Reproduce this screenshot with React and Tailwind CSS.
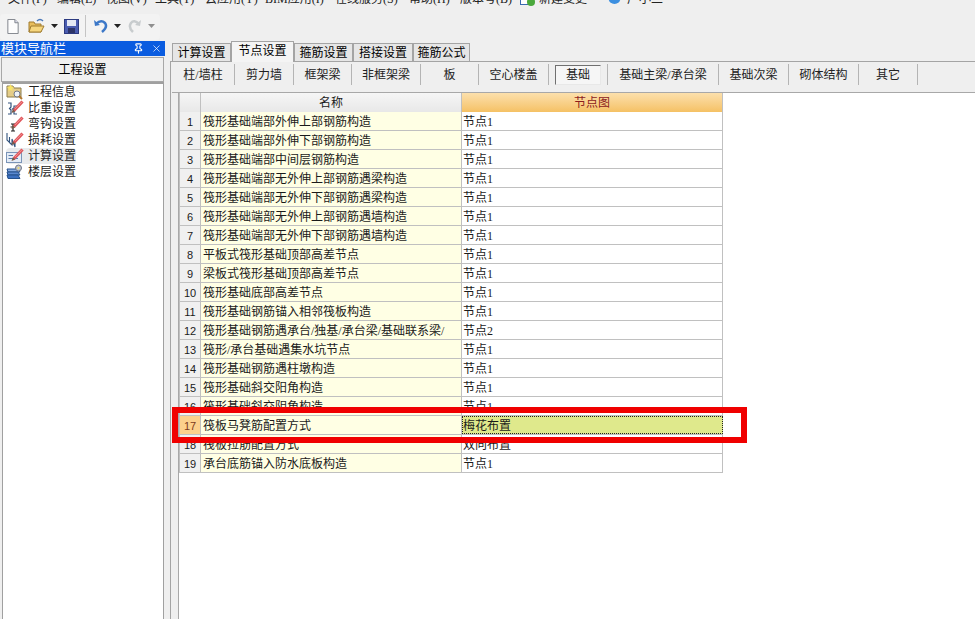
import { Pin, X } from "lucide-react";

const FONT = { fontFamily: '"Liberation Serif", "Noto Sans CJK SC", serif' };

const MENUS = [
  { label: "文件(F)", w: "w-[49px]" },
  { label: "编辑(E)", w: "w-[49px]" },
  { label: "视图(V)", w: "w-[49px]" },
  { label: "工具(T)", w: "w-[50px]" },
  { label: "云应用(Y)", w: "w-[60px]" },
  { label: "BIM应用(I)", w: "w-[70px]" },
  { label: "在线服务(S)", w: "w-[74px]" },
  { label: "帮助(H)", w: "w-[51px]" },
  { label: "版本号(B)", w: "w-[60px]" },
];

const TABS = [
  { label: "计算设置", w: "w-[59px]" },
  { label: "节点设置", w: "w-[63px]", active: true },
  { label: "箍筋设置", w: "w-[59px]" },
  { label: "搭接设置", w: "w-[60px]" },
  { label: "箍筋公式", w: "w-[57px]" },
];

const SUB_TABS = [
  { label: "柱/墙柱", w: "w-[63px]" },
  { label: "剪力墙", w: "w-[59px]" },
  { label: "框架梁", w: "w-[58px]" },
  { label: "非框架梁", w: "w-[69px]" },
  { label: "板", w: "w-[58px]" },
  { label: "空心楼盖", w: "w-[70px]" },
  { label: "基础", w: "w-[59px]", active: true },
  { label: "基础主梁/承台梁", w: "w-[111px]" },
  { label: "基础次梁", w: "w-[70px]" },
  { label: "砌体结构", w: "w-[70px]" },
  { label: "其它", w: "w-[59px]" },
];

const ROWS = [
  ["筏形基础端部外伸上部钢筋构造", "节点1"],
  ["筏形基础端部外伸下部钢筋构造", "节点1"],
  ["筏形基础端部中间层钢筋构造", "节点1"],
  ["筏形基础端部无外伸上部钢筋遇梁构造", "节点1"],
  ["筏形基础端部无外伸下部钢筋遇梁构造", "节点1"],
  ["筏形基础端部无外伸上部钢筋遇墙构造", "节点1"],
  ["筏形基础端部无外伸下部钢筋遇墙构造", "节点1"],
  ["平板式筏形基础顶部高差节点", "节点1"],
  ["梁板式筏形基础顶部高差节点", "节点1"],
  ["筏形基础底部高差节点", "节点1"],
  ["筏形基础钢筋锚入相邻筏板构造", "节点1"],
  ["筏形基础钢筋遇承台/独基/承台梁/基础联系梁/", "节点2"],
  ["筏形/承台基础遇集水坑节点", "节点1"],
  ["筏形基础钢筋遇柱墩构造", "节点1"],
  ["筏形基础斜交阳角构造", "节点1"],
  ["筏形基础斜交阴角构造", "节点1"],
  ["筏板马凳筋配置方式", "梅花布置", true],
  ["筏板拉筋配置方式", "双向布置"],
  ["承台底筋锚入防水底板构造", "节点1"],
];

// red pencil shared by the nav icons
function Pencil() {
  return (
    <g>
      <path d="M8 10.5 L16.5 1.5" stroke="#e0565c" strokeWidth="3.2" fill="none" />
      <path d="M9 9 L16 1.8" stroke="#f4a0a0" strokeWidth="0.8" fill="none" />
      <path d="M5.5 13 L6.8 9.2 L9.4 11.6 Z" fill="#7a5a48" />
    </g>
  );
}

function NavIcon({ type }) {
  return (
    <svg width="18" height="16" viewBox="0 0 18 16" className="shrink-0">
      {type === "info" && (
        <g>
          <path d="M1 2 H7 L8 4 H15 V13 H1 Z" fill="#e4cc88" stroke="#8c7c4c" />
          <path d="M4.5 0 L5.6 2.6 L8 3 L6.2 4.8 L6.6 7 L4.5 6 L2.4 7 L2.8 4.8 L1 3 L3.4 2.6 Z" fill="#f8e468" />
          <circle cx="11" cy="10" r="3" fill="#eef2f6" stroke="#70788a" />
          <path d="M13 12 L16 15" stroke="#b07830" strokeWidth="2" />
        </g>
      )}
      {type === "weight" && (
        <g>
          <path d="M2 3 H5 V7 L3.5 8.5 L5 10 V14 H2 M11 6 H8 V8 L6.5 9 L8 10 V14 H11" stroke="#34557f" strokeWidth="1.2" fill="none" />
          <Pencil />
        </g>
      )}
      {type === "hook" && (
        <g>
          <path d="M5 8 H9 M7 8 V15 M5 15 H9 M4.5 11 H7" stroke="#222" strokeWidth="1.2" fill="none" />
          <Pencil />
        </g>
      )}
      {type === "loss" && (
        <g>
          <path d="M1 1 V8 L3.5 10.5 V5 M3.5 10.5 L6 13 V7 L9 15 V10" stroke="#34557f" strokeWidth="1.1" fill="none" />
          <Pencil />
        </g>
      )}
      {type === "calc" && (
        <g>
          <rect x="0.5" y="4.5" width="15" height="10" fill="#e4ecf6" stroke="#7a94b8" />
          <path d="M2.5 7.5 H7 M2.5 10.5 H12" stroke="#5a7cac" />
          <Pencil />
        </g>
      )}
      {type === "floor" && (
        <g>
          <path d="M1 5 H12 L14 8 H2 Z" fill="#86aae0" stroke="#24508c" />
          <path d="M1 8 H12 L14 11 H2 Z" fill="#5a88d0" stroke="#24508c" />
          <path d="M1 11 H12 L14 14.5 H2 Z" fill="#3c70c0" stroke="#24508c" />
          <circle cx="12.5" cy="4" r="3" fill="#c0c4ca" stroke="#70788a" />
          <circle cx="12.5" cy="4" r="1" fill="#f4e070" />
        </g>
      )}
    </svg>
  );
}

const NAV = [
  { label: "工程信息", type: "info" },
  { label: "比重设置", type: "weight" },
  { label: "弯钩设置", type: "hook" },
  { label: "损耗设置", type: "loss" },
  { label: "计算设置", type: "calc", active: true },
  { label: "楼层设置", type: "floor" },
];

function Caret({ className }) {
  return (
    <svg width="7" height="4" viewBox="0 0 7 4" className={className}>
      <path d="M0 0 H7 L3.5 4 Z" fill="currentColor" />
    </svg>
  );
}

function MenuBar() {
  return (
    <div className="flex h-[7px] overflow-hidden pl-[8px] text-[12px] leading-[14px] text-[#222]">
      <div className="flex -mt-[8px] items-start">
        {MENUS.map((m) => (
          <span key={m.label} className={`${m.w} shrink-0 whitespace-nowrap`}>
            {m.label}
          </span>
        ))}
        <svg width="16" height="14" viewBox="0 0 16 14" className="mr-[3px] shrink-0">
          <rect x="0.5" y="0.5" width="11" height="12" fill="#fff" stroke="#3a6ab0" />
          <circle cx="11" cy="10" r="4" fill="#4aa83c" />
        </svg>
        <span className="w-[69px] shrink-0 whitespace-nowrap">新建变更</span>
        <svg width="13" height="14" viewBox="0 0 13 14" className="mr-[6px] shrink-0">
          <circle cx="6.5" cy="6" r="6" fill="#3c8fe0" />
        </svg>
        <span className="whitespace-nowrap">广小二</span>
      </div>
    </div>
  );
}

function ToolBar() {
  return (
    <div className="mt-[7px] flex h-[26px] w-[160px] items-center rounded-sm bg-[#f3f3f3] pb-[2px] pl-[7px]">
      <svg width="12" height="15" viewBox="0 0 12 16" className="shrink-0">
        <path d="M0.5 0.5 H8 L11.5 4 V15.5 H0.5 Z" fill="#fdfdfd" stroke="#7c8088" />
        <path d="M8 0.5 V4 H11.5" fill="#dde" stroke="#7c8088" />
      </svg>
      <svg width="17" height="16" viewBox="0 0 17 16" className="ml-[9px] shrink-0">
        <path d="M1 4 H6 L7 6 H13 V14 H1 Z" fill="#e8bd5c" stroke="#a07c30" />
        <path d="M3 8 H16 L13 14 H1 Z" fill="#f6d67e" stroke="#a07c30" />
        <path d="M9 3 Q12 0 15 3" stroke="#4a78b8" strokeWidth="1.5" fill="none" />
      </svg>
      <Caret className="ml-[6px] text-[#222]" />
      <svg width="15" height="15" viewBox="0 0 15 15" className="ml-[6px] shrink-0">
        <rect x="0.5" y="0.5" width="14" height="14" fill="#4a5cb0" stroke="#2c3a80" />
        <rect x="3" y="1" width="9" height="6" fill="#e4e8f4" />
        <rect x="4" y="9" width="7" height="5" fill="#2c3468" />
      </svg>
      <div className="ml-[6px] h-[22px] w-[1px] shrink-0 bg-[#c4c4c4]" />
      <svg width="14" height="14" viewBox="0 0 14 14" className="ml-[8px] shrink-0">
        <path d="M2 5 Q7 0 11 4 Q14 8 8 13" stroke="#3c78c8" strokeWidth="2.5" fill="none" />
        <path d="M0 1 L1 7 L6 6 Z" fill="#3c78c8" />
      </svg>
      <Caret className="ml-[6px] text-[#222]" />
      <svg width="13" height="14" viewBox="0 0 13 14" className="ml-[7px] shrink-0">
        <path d="M11 5 Q6 0 3 4 Q0 8 5 13" stroke="#c8ccce" strokeWidth="2.5" fill="none" />
        <path d="M13 1 L12 7 L7 6 Z" fill="#c8ccce" />
      </svg>
      <Caret className="ml-[7px] text-[#909090]" />
    </div>
  );
}

function NavPanel() {
  return (
    <div className="flex w-[165px] shrink-0 flex-col">
      <div className="flex h-[15px] items-center bg-[#0a5ce0] text-[13px] text-white">
        <span className="flex-1 whitespace-nowrap pl-[1px]">模块导航栏</span>
        <Pin size={11} strokeWidth={2.4} className="mr-[7px]" />
        <X size={11} strokeWidth={1.5} className="mr-[3px]" />
      </div>
      <div className="ml-[1px] mt-[1px] flex h-[25px] w-[163px] items-center justify-center border border-[#a8a8a8] bg-[#f0f0f0] text-[12px]">
        工程设置
      </div>
      <div className="ml-[2px] w-[162px] flex-1 border-x border-t-2 border-x-[#a0a0a0] border-t-[#a0a0a0] bg-white pl-[3px]">
        {NAV.map((n) => (
          <div key={n.label} className="flex h-[16px] items-center text-[12px] leading-[16px] text-[#222]">
            <div className={`flex h-[16px] w-[70px] items-center rounded-sm ${n.active ? "bg-[#e8eaec]" : ""}`}>
              <NavIcon type={n.type} />
              <span className="ml-[4px] whitespace-nowrap">{n.label}</span>
            </div>
          </div>
        ))}
      </div>
    </div>
  );
}

function Tabs() {
  return (
    <div className="flex h-[20px] items-end pl-[2px]">
      {TABS.map((t) => (
        <div
          key={t.label}
          className={`flex ${t.w} shrink-0 items-center justify-center border border-b-0 border-[#a4a4a4] text-[12px] ${
            t.active ? "relative z-10 -mb-[1px] h-[21px] bg-[#f4f4f4] pb-[2px]" : "h-[18px] bg-[#e6e6e6]"
          }`}
        >
          {t.label}
        </div>
      ))}
    </div>
  );
}

function SubTabs() {
  return (
    <div className="flex h-[31px] items-center border-b border-[#a8a8a8] pb-[5px]">
      {SUB_TABS.map((t) => (
        <div
          key={t.label}
          className={`flex h-[21px] ${t.w} shrink-0 items-center justify-center border-r border-[#b4b4b4] text-[12px] text-[#222]`}
        >
          {t.active ? (
            <span className="flex h-[20px] w-[46px] items-center justify-center border border-[#e8e8e8] border-l-[#707070] border-t-[#707070] bg-[#f6f6f6]">
              {t.label}
            </span>
          ) : (
            t.label
          )}
        </div>
      ))}
    </div>
  );
}

function Grid() {
  return (
    <div className="w-[544px] border-l border-[#c0c0c0] text-[12px] leading-[21px] text-[#1a1a1a]">
      <div className="flex h-[19px]">
        <div className="w-[21px] shrink-0 border-r border-[#c0c0c0] bg-gradient-to-b from-[#f6f6f6] to-[#e8e8e8]" />
        <div className="w-[261px] shrink-0 border-r border-[#c0c0c0] bg-gradient-to-b from-[#f6f6f6] to-[#e8e8e8] text-center">
          名称
        </div>
        <div className="w-[261px] shrink-0 border-r border-[#c0c0c0] bg-gradient-to-b from-[#fce0ac] to-[#f5c164] text-center text-[#8c1c1c]">
          节点图
        </div>
      </div>
      {ROWS.map(([name, value, active], i) => (
        <div key={i} className="flex h-[19px] overflow-hidden border-b border-[#c0c0c0]">
          <div
            className={`w-[21px] shrink-0 border-r border-[#c0c0c0] text-center text-[11px] ${
              active ? "bg-[#fcd08c] text-[#7c3a1c]" : "bg-[#f0f0f0]"
            }`}
            style={{ fontFamily: '"Liberation Sans", sans-serif' }}
          >
            {i + 1}
          </div>
          <div className="w-[261px] shrink-0 overflow-hidden whitespace-nowrap border-r border-[#c0c0c0] bg-[#ffffe4] pl-[2px]">
            {name}
          </div>
          {active ? (
            <div className="w-[261px] shrink-0 border border-dotted border-[#222] bg-[#dfe98c] leading-[19px]">
              {value}
            </div>
          ) : (
            <div className="w-[261px] shrink-0 border-r border-[#c0c0c0] bg-white pl-[1px]">{value}</div>
          )}
        </div>
      ))}
    </div>
  );
}

export default function App() {
  return (
    <div className="relative flex h-[619px] w-[975px] flex-col overflow-hidden bg-[#efefef]" style={FONT}>
      <MenuBar />
      <ToolBar />
      <div className="mt-[1px] flex flex-1">
        <NavPanel />
        <div className="ml-[5px] flex flex-1 flex-col">
          <Tabs />
          <div className="flex flex-1 flex-col border-l border-t border-[#a4a4a4] pl-[1px]">
            <SubTabs />
            <div className="ml-[6px] flex-1 border-l border-[#a8a8a8] bg-white">
              <Grid />
            </div>
          </div>
        </div>
      </div>
      {/* red callout drawn over the grid */}
      <div className="absolute left-[172px] top-[407px] h-[36px] w-[575px] border-[6px] border-[#f00000]" />
    </div>
  );
}
